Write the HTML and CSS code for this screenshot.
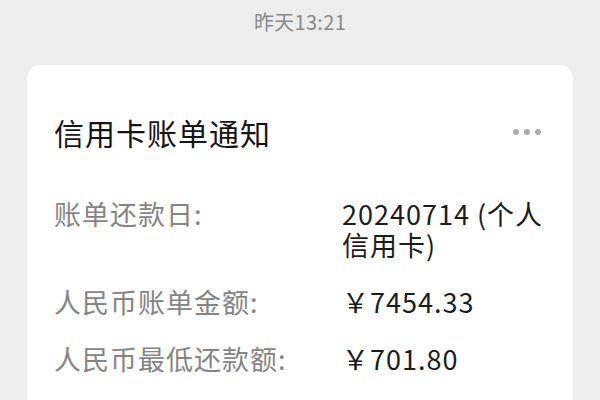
FILE: index.html
```html
<!DOCTYPE html>
<html lang="zh-CN">
<head>
<meta charset="utf-8">
<link rel="stylesheet" href="styles.css">
</head>
<body>
<div class="time">昨天13:21</div>
<div class="card">
  <div class="head">
    <div class="title">信用卡账单通知</div>
    <div class="more"><span></span><span></span><span></span></div>
  </div>
  <div class="rows">
    <div class="label">账单还款日:</div>
    <div class="value">20240714 (个人信用卡)</div>
    <div class="label">人民币账单金额:</div>
    <div class="value">￥7454.33</div>
    <div class="label">人民币最低还款额:</div>
    <div class="value">￥701.80</div>
  </div>
</div>
</body>
</html>
```
FILE: styles.css
```css
html, body {
  margin: 0;
  padding: 0;
  background: #ededed;
  font-family: "Noto Sans CJK SC", "Noto Sans", sans-serif;
}
.time {
  height: 43px;
  line-height: 43px;
  text-align: center;
  font-size: 20px;
  letter-spacing: 0.3px;
  color: #8a8a8a;
}
.card {
  margin: 22px 27px 0;
  background: #ffffff;
  border-radius: 13px;
  padding: 47px 20px 40px 27px;
}
.head {
  display: flex;
  align-items: center;
  justify-content: space-between;
}
.title {
  font-size: 30px;
  line-height: 40px;
  letter-spacing: 1px;
  color: #151515;
}
.more {
  display: flex;
  gap: 5px;
  margin-right: 12px;
}
.more span {
  width: 6px;
  height: 6px;
  border-radius: 50%;
  background: #ababab;
}
.rows {
  margin-top: 46px;
  display: grid;
  grid-template-columns: 288px 1fr;
  row-gap: 26px;
  font-size: 27px;
  line-height: 31px;
  letter-spacing: 1px;
}
.label {
  color: #858585;
}
.value {
  color: #1c1c1c;
}
```
